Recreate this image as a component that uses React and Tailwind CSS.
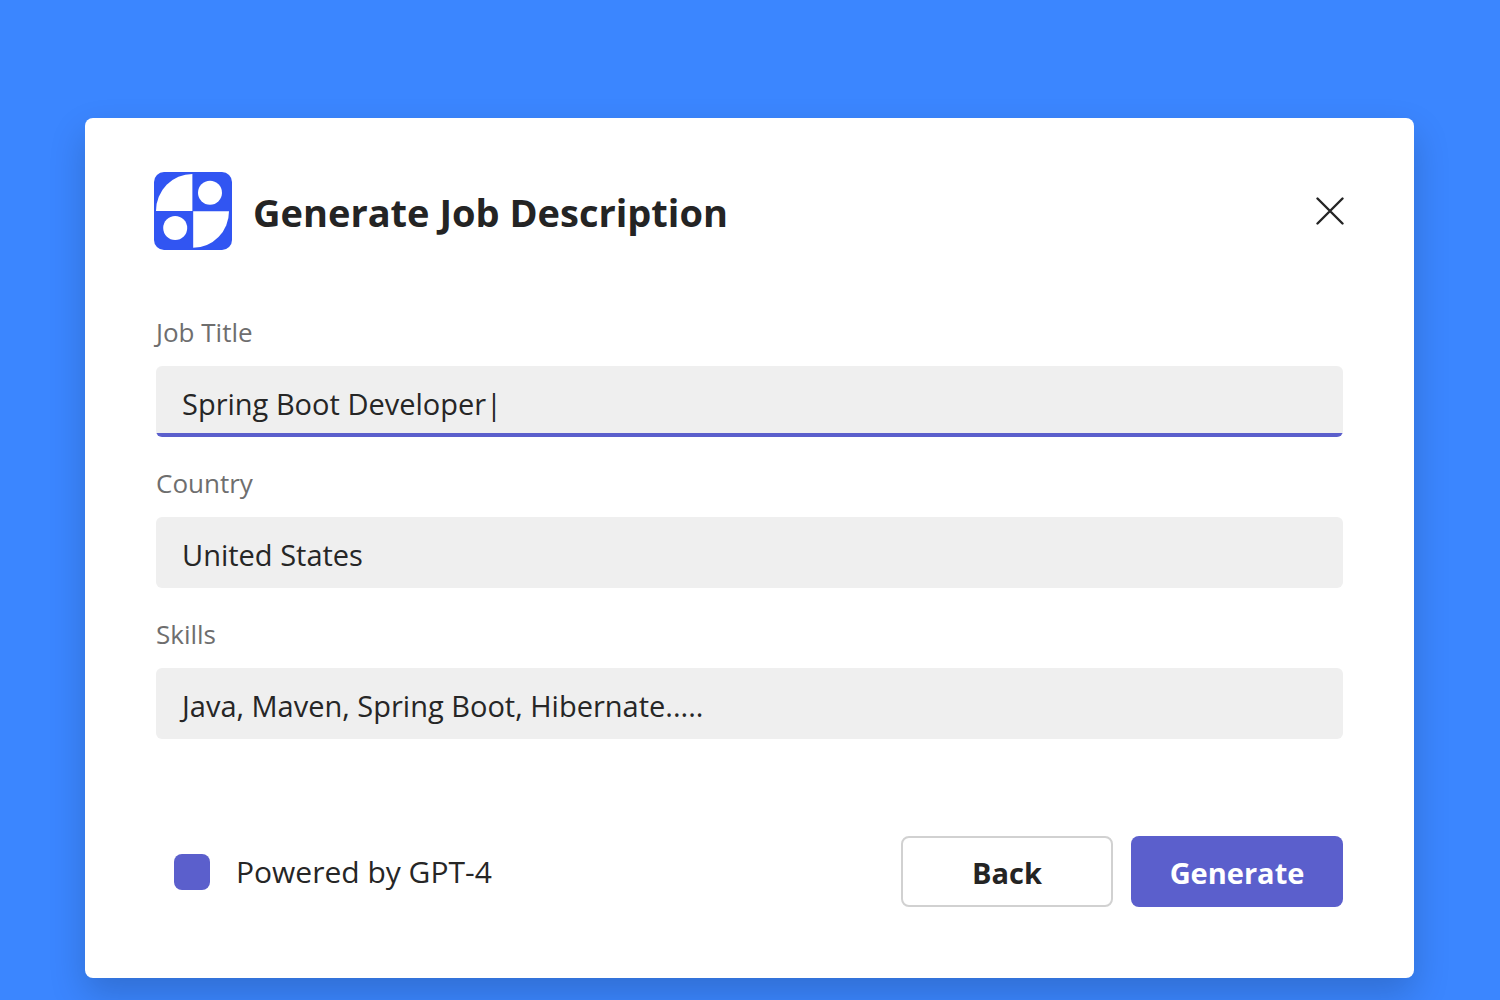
import { useState } from "react";

function Logo() {
  return (
    <svg viewBox="0 0 78 78" className="size-[78px] shrink-0" aria-hidden="true">
      <rect width="78" height="78" rx="10" fill="#3155f2" />
      <path d="M38.4 2V39H2A36.4 37 0 0 1 38.4 2Z" fill="#fff" />
      <path d="M39.2 39.2H75A35.8 36.6 0 0 1 39.2 75.8Z" fill="#fff" />
      <circle cx="56" cy="20.8" r="12" fill="#fff" />
      <circle cx="21.2" cy="56" r="12" fill="#fff" />
    </svg>
  );
}

function Field({ id, label, initial, active }) {
  const [value, setValue] = useState(initial);
  return (
    <div className="flex flex-col gap-4">
      <label htmlFor={id} className="text-[26px] leading-9 text-[#6e6e6e]">
        {label}
      </label>
      <input
        id={id}
        type="text"
        value={value}
        onChange={(e) => setValue(e.target.value)}
        className={
          active
            ? "h-[71px] w-full rounded-md bg-[linear-gradient(to_top,#5b5fcc_4px,#efefef_4px)] px-5 pt-1 indent-1.5 text-[29px] text-[#262626] outline-none"
            : "h-[71px] w-full rounded-md bg-[#efefef] px-5 pt-1 indent-1.5 text-[29px] text-[#262626] outline-none"
        }
      />
    </div>
  );
}

export default function App() {
  return (
    <div className="min-h-screen overflow-hidden bg-[#3b86ff] px-[85px] pt-[118px] font-['Open_Sans',sans-serif]">
      <main className="mr-px rounded-lg bg-white px-[69px] pt-[54px] pb-[71px] shadow-[0_16px_36px_rgba(0,0,0,0.18)]">
        <header className="flex items-center gap-[21px]">
          <Logo />
          <h1 className="flex-1 pt-0.5 text-[38px] leading-[52px] font-bold text-[#242424]">
            Generate Job Description
          </h1>
          <button type="button" aria-label="Close" className="p-px">
            <svg viewBox="0 0 28 28" className="size-7" fill="none" stroke="#242424" strokeWidth="2.4" strokeLinecap="round" aria-hidden="true">
              <path d="M1.5 1.5 26.5 26.5M26.5 1.5 1.5 26.5" />
            </svg>
          </button>
        </header>

        <form className="px-0.5 pt-16" onSubmit={(e) => e.preventDefault()}>
          <div className="flex flex-col gap-7">
            <Field id="job-title" label="Job Title" initial="Spring Boot Developer|" active />
            <Field id="country" label="Country" initial="United States" />
            <Field id="skills" label="Skills" initial="Java, Maven, Spring Boot, Hibernate....." />
          </div>

          <footer className="flex items-center gap-[18px] pt-[97px]">
            <div className="flex flex-1 items-center gap-[26px] pl-[18px]">
              <span className="size-9 rounded-lg bg-[#5b5fcc]" />
              <p className="text-[30px] leading-10 text-[#262626]">Powered by GPT-4</p>
            </div>
            <button
              type="button"
              className="h-[71px] w-[212px] rounded-lg border-2 border-[#d1d1d1] bg-white pt-0.5 text-[29px] font-bold text-[#242424]"
            >
              Back
            </button>
            <button
              type="submit"
              className="h-[71px] w-[212px] rounded-lg bg-[#5b5fcc] pt-0.5 text-[29px] font-bold text-white"
            >
              Generate
            </button>
          </footer>
        </form>
      </main>
    </div>
  );
}
